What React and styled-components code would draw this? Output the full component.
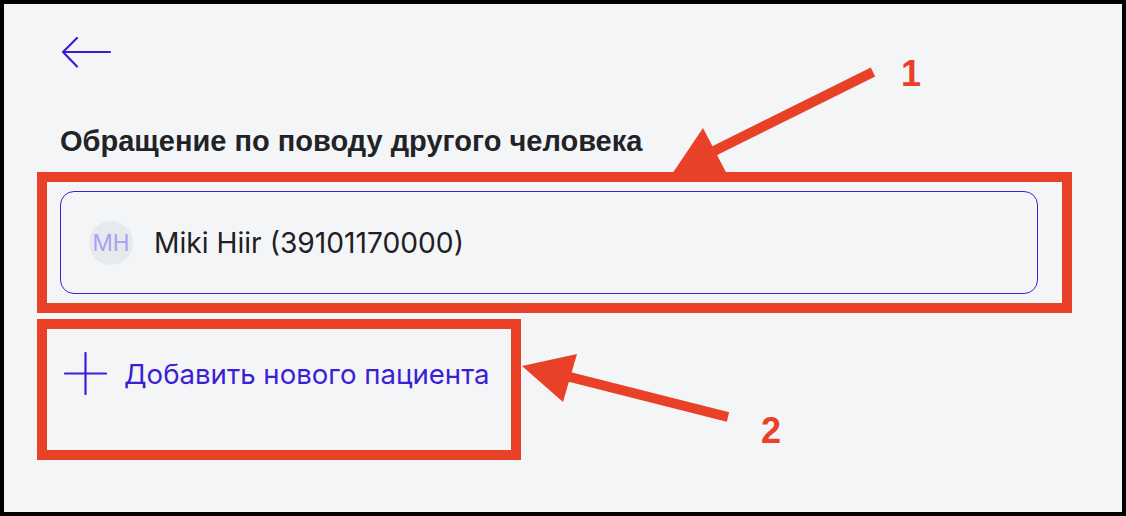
import React from "react";
import styled, { createGlobalStyle } from "styled-components";

const Global = createGlobalStyle`
  html, body { margin: 0; padding: 0; background: #f4f5f7; }
  * { box-sizing: border-box; }
`;

const INDIGO = "#3b1fd6";
const RED = "#e94128";

const Frame = styled.div`
  position: relative;
  width: 1126px;
  height: 516px;
  border: 4px solid #000;
  background: #f4f5f7;
  padding: 33px 84px 0 56px;
  display: flex;
  flex-direction: column;
  font-family: Inter, "Noto Sans", sans-serif;
  overflow: hidden;
`;

const BackButton = styled.button`
  all: unset;
  display: block;
  width: 52px;
  height: 32px;
  cursor: pointer;
  svg { display: block; }
`;

const Title = styled.h2`
  margin: 55px 0 0 0;
  font-family: "Liberation Sans", Arial, sans-serif;
  font-weight: 700;
  font-size: 29px;
  line-height: 34px;
  color: #222326;
`;

const PatientCard = styled.div`
  margin-top: 33px;
  height: 103px;
  border: 1px solid ${INDIGO};
  border-radius: 14px;
  display: flex;
  align-items: center;
  gap: 21px;
  padding-left: 28px;
`;

const Avatar = styled.div`
  width: 44px;
  height: 44px;
  border-radius: 50%;
  background: #e6eaed;
  color: #ad9ff2;
  font-size: 22.5px;
  font-weight: 400;
  display: flex;
  align-items: center;
  justify-content: center;
`;

const PatientName = styled.span`
  font-size: 28.2px;
  color: #1f2023;
`;

const AddButton = styled.button`
  all: unset;
  margin-top: 58px;
  margin-left: 4px;
  display: flex;
  align-items: center;
  gap: 17px;
  color: ${INDIGO};
  font-family: Inter, "Noto Sans", sans-serif;
  font-size: 27.6px;
  cursor: pointer;
  svg { display: block; }
`;

const Annotations = styled.svg`
  position: absolute;
  left: -4px;
  top: -4px;
  width: 1126px;
  height: 516px;
  pointer-events: none;
`;

const Label = styled.text`
  font-family: "Liberation Sans", Arial, sans-serif;
  font-weight: 700;
  font-size: 36px;
  fill: ${RED};
`;

export default function App() {
  return (
    <>
      <Global />
      <Frame>
        <BackButton aria-label="Назад">
          <svg width="52" height="32" viewBox="0 0 52 32" fill="none">
            <path
              d="M50 15H3M17 1L3 15L17 29.5"
              stroke={INDIGO}
              strokeWidth="2.2"
              strokeLinecap="round"
              strokeLinejoin="round"
            />
          </svg>
        </BackButton>
        <Title>Обращение по поводу другого человека</Title>
        <PatientCard>
          <Avatar>MH</Avatar>
          <PatientName>Miki Hiir (39101170000)</PatientName>
        </PatientCard>
        <AddButton>
          <svg width="43" height="43" viewBox="0 0 43 43" fill="none">
            <path d="M21.5 1V42M1 21.5H42" stroke={INDIGO} strokeWidth="2.2" strokeLinecap="round" />
          </svg>
          Добавить нового пациента
        </AddButton>
        <Annotations viewBox="0 0 1126 516">
          <rect x="42" y="177" width="1025" height="131" fill="none" stroke={RED} strokeWidth="10" />
          <rect x="42" y="324" width="474" height="131" fill="none" stroke={RED} strokeWidth="10" />
          <line x1="873" y1="72" x2="712" y2="152" stroke={RED} strokeWidth="10" />
          <polygon points="703,128 668,180 730,180" fill={RED} />
          <line x1="728" y1="417" x2="562" y2="375" stroke={RED} strokeWidth="10" />
          <polygon points="522,366 577,354 563,402" fill={RED} />
          <Label x="901" y="86">1</Label>
          <Label x="761" y="443">2</Label>
        </Annotations>
      </Frame>
    </>
  );
}
